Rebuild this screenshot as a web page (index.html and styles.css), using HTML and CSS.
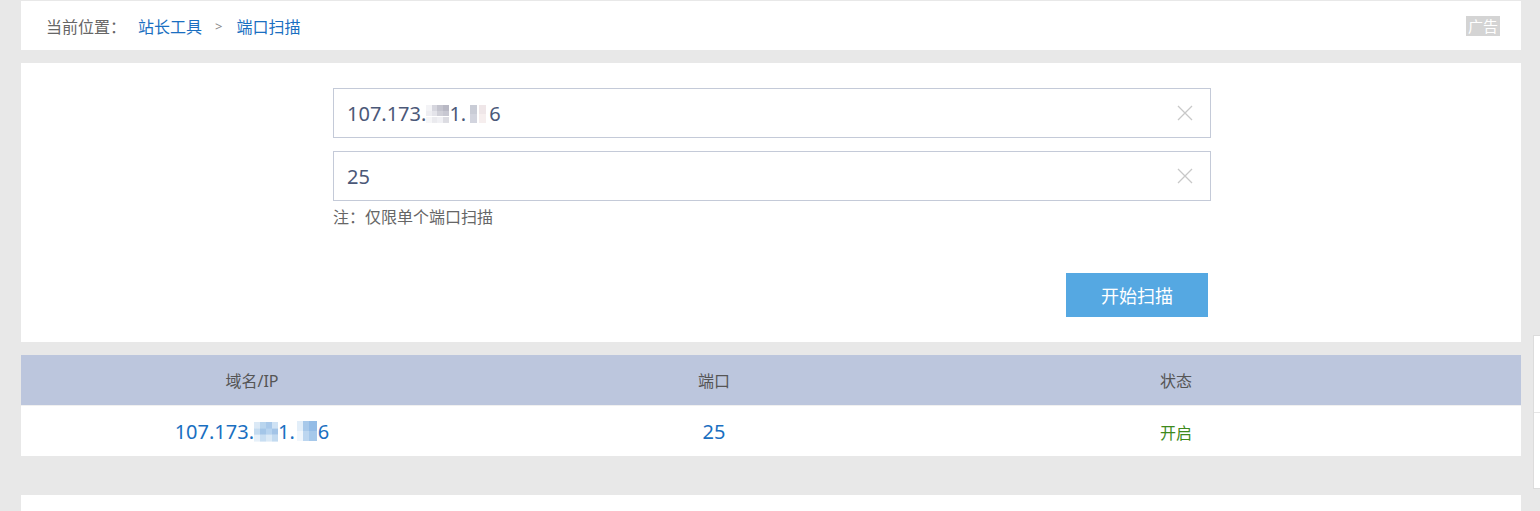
FILE: index.html
```html
<!DOCTYPE html>
<html lang="zh-CN">
<head>
    <meta charset="UTF-8">
    <title>端口扫描 - 站长工具</title>
    <link rel="stylesheet" href="styles.css">
</head>
<body>
    <div class="wrap">
        <div class="crumb">
            <span class="crumb-label">当前位置：</span>
            <a href="#">站长工具</a>
            <span class="crumb-sep">&gt;</span>
            <a href="#">端口扫描</a>
            <span class="ad-tag">广告</span>
        </div>

        <div class="scan-box">
            <div class="scan-form">
                <div class="field">
                    <span class="field-text">107.173.<span class="mask mask-a"></span>1.<span class="mask mask-b"></span>6</span>
                    <svg class="clear" width="18" height="18" viewBox="0 0 18 18"><path d="M2 2L16 16M16 2L2 16" stroke="#c8c8c8" stroke-width="1.3" fill="none"/></svg>
                </div>
                <div class="field">
                    <span class="field-text">25</span>
                    <svg class="clear" width="18" height="18" viewBox="0 0 18 18"><path d="M2 2L16 16M16 2L2 16" stroke="#c8c8c8" stroke-width="1.3" fill="none"/></svg>
                </div>
                <p class="note">注：仅限单个端口扫描</p>
                <div class="actions">
                    <button class="scan-btn">开始扫描</button>
                </div>
            </div>
        </div>

        <div class="result">
            <div class="result-row result-head">
                <div>域名/IP</div>
                <div>端口</div>
                <div>状态</div>
            </div>
            <div class="result-row result-body">
                <div class="ip">107.173.<span class="mask mask-c"></span>1.<span class="mask mask-d"></span>6</div>
                <div class="port">25</div>
                <div class="status">开启</div>
            </div>
        </div>

        <div class="next-box"></div>
    </div>

    <div class="side-float">
        <div class="side-item"></div>
        <div class="side-item"></div>
    </div>
</body>
</html>
```

FILE: styles.css
```css
* {
    margin: 0;
    padding: 0;
    box-sizing: border-box;
}

body {
    font-family: "Noto Sans", "Noto Sans CJK SC", sans-serif;
    background: #e8e8e8;
    padding-top: 1px;
    overflow: hidden;
}

a {
    color: #1a6fc1;
    text-decoration: none;
}

.wrap {
    width: 1500px;
    margin-left: 21px;
}

.crumb {
    height: 49px;
    background: #fff;
    display: flex;
    align-items: center;
    padding-left: 25px;
    padding-right: 21px;
    font-size: 16px;
    color: #666;
}

.crumb-label {
    margin-right: 12px;
}

.crumb-sep {
    margin: 0 14px 0 13px;
    color: #888;
    font-size: 13px;
}

.ad-tag {
    margin-left: auto;
    background: #d4d4d4;
    color: #fff;
    font-size: 15px;
    line-height: 20px;
    padding: 0 2px;
    margin-top: 1px;
}

.scan-box {
    margin-top: 13px;
    background: #fff;
    padding: 25px 0;
}

.scan-form {
    width: 878px;
    margin-left: 312px;
}

.field {
    height: 50px;
    border: 1px solid #c4cad8;
    display: flex;
    align-items: center;
    padding: 0 16px 0 13px;
    margin-bottom: 13px;
}

.field + .field {
    margin-bottom: 5px;
}

.field-text {
    flex: 1;
    font-size: 20px;
    color: #4b5878;
    display: flex;
    align-items: center;
}

.clear {
    flex: none;
}

.mask {
    display: inline-block;
    height: 18px;
    margin-top: 1px;
}

.mask-a {
    width: 23px;
    background:
        linear-gradient(90deg, #f3f3f6 0 25%, #d6d6de 25% 50%, #c4c4ce 50% 75%, #b8b8c4 75%) top / 100% 33% no-repeat,
        linear-gradient(90deg, #eeeef2 0 25%, #e4e4ea 25% 50%, #d0d0d8 50% 75%, #c8c8d2 75%) center / 100% 34% no-repeat,
        linear-gradient(90deg, #f6f6f8 0 25%, #eaeaee 25% 50%, #f0f0f4 50% 75%, #dcdce2 75%) bottom / 100% 33% no-repeat;
}

.mask-b {
    width: 20px;
    margin: 1px 1px 0 2px;
    background:
        linear-gradient(90deg, #fff 0 10%, #c9ccd6 10% 45%, #fff 45% 55%, #efe6e8 55% 90%, #fff 90%) top / 100% 50% no-repeat,
        linear-gradient(90deg, #fff 0 10%, #d2d4de 10% 45%, #fff 45% 55%, #f6eeee 55% 90%, #fff 90%) bottom / 100% 50% no-repeat;
}

.mask-c {
    width: 24px;
    height: 20px;
    background:
        linear-gradient(90deg, #dbe9f6 0 25%, #b9d5ee 25% 50%, #a9c9ea 50% 75%, #cfe2f4 75%) top / 100% 33% no-repeat,
        linear-gradient(90deg, #c4dbf0 0 25%, #a4c6e8 25% 50%, #b6d3ef 50% 75%, #a3c4e7 75%) center / 100% 34% no-repeat,
        linear-gradient(90deg, #e6f0f9 0 25%, #c8def2 25% 50%, #dae9f6 50% 75%, #c2daf0 75%) bottom / 100% 33% no-repeat;
}

.mask-d {
    width: 20px;
    height: 20px;
    margin: 0 1px 0 2px;
    background:
        linear-gradient(90deg, #e2eef9 0 30%, #a8c9ea 30% 60%, #94bce6 60%) top / 100% 50% no-repeat,
        linear-gradient(90deg, #f0f6fc 0 30%, #bcd6f0 30% 60%, #a6c8ea 60%) bottom / 100% 50% no-repeat;
}

.note {
    font-size: 16px;
    color: #666;
    line-height: 22px;
}

.actions {
    display: flex;
    justify-content: flex-end;
    padding-right: 3px;
    margin-top: 45px;
}

.scan-btn {
    width: 142px;
    height: 44px;
    background: #55a8e2;
    border: none;
    color: #fff;
    font-family: inherit;
    font-size: 18px;
    cursor: pointer;
}

.result {
    margin-top: 13px;
}

.result-row {
    display: grid;
    grid-template-columns: 462px 462px 462px;
    align-items: center;
    text-align: center;
}

.result-head {
    height: 50px;
    background: #bcc6dd;
    font-size: 16px;
    color: #555;
}

.result-body {
    height: 51px;
    background: #fff;
    border-top: 1px solid #f0f0f0;
}

.ip, .port {
    font-size: 20px;
    color: #1a6fc1;
}

.ip {
    display: flex;
    justify-content: center;
    align-items: center;
}

.status {
    font-size: 16px;
    color: #3e8a1c;
    padding-top: 2px;
}

.next-box {
    margin-top: 39px;
    height: 40px;
    background: #fff;
}

.side-float {
    position: fixed;
    left: 1533px;
    top: 335px;
    width: 60px;
    height: 154px;
    background: #fff;
    border: 1px solid #dcdcdc;
}

.side-item {
    height: 76px;
}

.side-item + .side-item {
    border-top: 1px solid #e6e6e6;
}
```
